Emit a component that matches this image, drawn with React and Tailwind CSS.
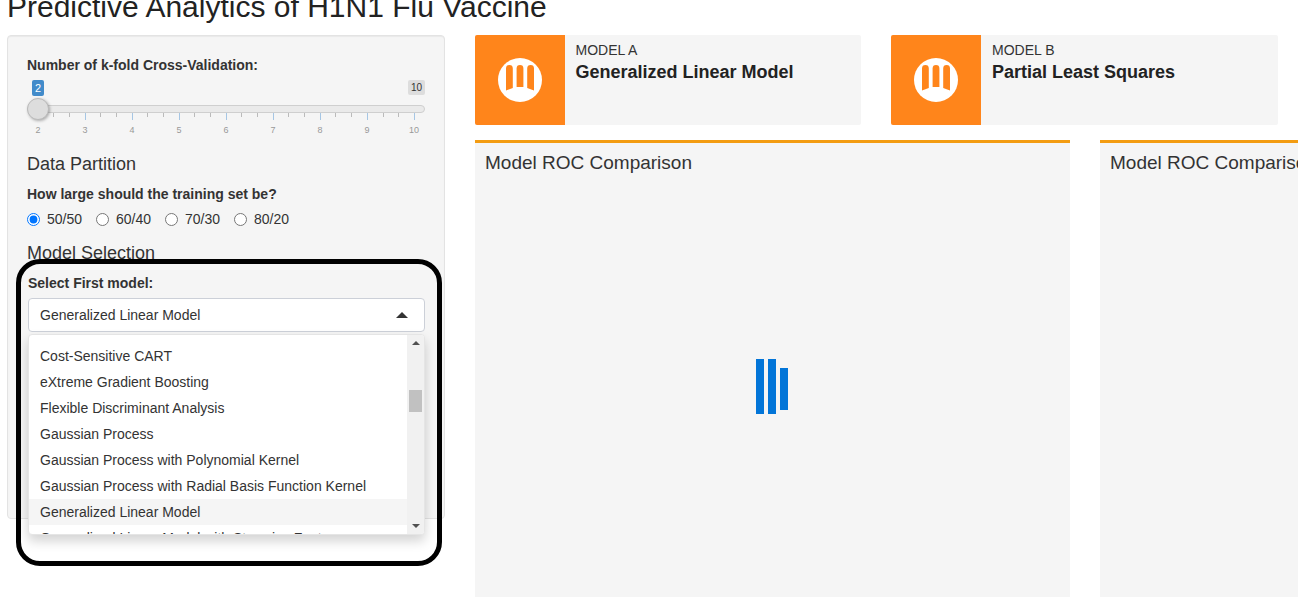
const items = [
  "Cost-Sensitive CART",
  "eXtreme Gradient Boosting",
  "Flexible Discriminant Analysis",
  "Gaussian Process",
  "Gaussian Process with Polynomial Kernel",
  "Gaussian Process with Radial Basis Function Kernel",
  "Generalized Linear Model",
  "Generalized Linear Model with Stepwise Feature",
];

function ModelIcon() {
  return (
    <svg width="44" height="44" viewBox="0 0 44 44">
      <circle cx="22" cy="22" r="22" fill="#fff" />
      <path d="M8 32.5V10.5a3.4 3.4 0 0 1 6.8 0V30Z" fill="#ff851b" />
      <path d="M18.6 29V10.4a3.4 3.4 0 0 1 6.8 0V29Z" fill="#ff851b" />
      <path d="M36 32.5V10.5a3.4 3.4 0 0 0-6.8 0V30Z" fill="#ff851b" />
    </svg>
  );
}

function InfoBox({ label, name, wide }) {
  return (
    <div className={`flex h-[90px] bg-[#f5f5f5] rounded-[2px] overflow-hidden ${wide ? "w-[387px]" : "w-[386px]"}`}>
      <div className="w-[90px] h-[90px] bg-[#ff851b] flex items-center justify-center shrink-0">
        <ModelIcon />
      </div>
      <div className={`pt-[5px] ${wide ? "pl-[11px]" : "pl-[10.5px]"}`}>
        <div className="text-[14px] leading-[20px] text-[#333]">{label}</div>
        <div className="text-[18px] leading-[22px] mt-[1px] font-bold text-[#222]">{name}</div>
      </div>
    </div>
  );
}

function Panel({ loader }) {
  return (
    <div className="relative w-[595px] h-[600px] shrink-0 bg-[#f5f5f5] border-t-[3px] border-[#f39c12] px-[10px] pt-[7px]">
      <div className="text-[19px] leading-[26px] text-[#333] whitespace-nowrap">Model ROC Comparison</div>
      {loader && (
        <div className="absolute left-[281px] top-[216px] flex items-start gap-[4px]">
          <div className="w-[8px] h-[55px] bg-[#0275d8]" />
          <div className="w-[8px] h-[55px] bg-[#0275d8]" />
          <div className="w-[8px] h-[42px] mt-[9px] bg-[#0275d8]" />
        </div>
      )}
    </div>
  );
}

function Slider() {
  const majors = Array.from({ length: 9 }, (_, i) => i);
  return (
    <div className="mt-[5px]">
      <div className="flex justify-between items-start h-[17px] pl-[5px]">
        <span className="w-[12px] h-[16px] rounded-[2px] bg-[#428bca] text-white text-[11px] leading-[16px] text-center">2</span>
        <span className="w-[17px] h-[15px] rounded-[2px] bg-[#dddddd] text-[#333] text-[10px] leading-[15px] text-center">10</span>
      </div>
      <div className="relative h-[8px] mt-[8px] rounded-[4px] bg-[#eaeaea] border border-[#cfcfcf]">
        <div className="absolute left-[-1px] top-[-8px] w-[22px] h-[22px] rounded-full bg-[#dddddd] border border-[#bbbbbb] shadow-[1px_1px_3px_rgba(0,0,0,0.3)]" />
      </div>
      <svg className="block" width="398" height="7" viewBox="0 0 398 7">
        {majors.map((i) => (
          <rect key={i} x={Math.round(10.5 + i * 47.05)} y="0" width="1" height="7" fill="#a6c6e4" />
        ))}
        {majors.slice(0, 8).map((i) => (
          <g key={i}>
            <rect x={Math.round(10.5 + i * 47.05 + 15.7)} y="0" width="1" height="4" fill="#bbb" />
            <rect x={Math.round(10.5 + i * 47.05 + 31.4)} y="0" width="1" height="4" fill="#bbb" />
          </g>
        ))}
      </svg>
      <div className="flex justify-between -ml-[1px] w-[400px] mt-[3px] text-[9px] leading-[14px] text-[#999] text-center">
        {[2, 3, 4, 5, 6, 7, 8, 9, 10].map((n) => (
          <span key={n} className="w-[24px]">{n}</span>
        ))}
      </div>
    </div>
  );
}

function Radio({ label, checked, className }) {
  return (
    <label className={`flex items-center text-[14px] leading-[20px] text-[#333] ${className}`}>
      <input type="radio" name="split" defaultChecked={checked} className="w-[13px] h-[13px] m-0 mr-[7px]" />
      {label}
    </label>
  );
}

export default function App() {
  return (
    <div className="relative w-[1298px] h-[597px] overflow-hidden bg-white font-['Liberation_Sans',Arial,sans-serif] text-[#333]">
      <h1 className="mt-[-10px] ml-[7px] h-[45px] text-[30px] leading-[33px] font-normal text-[#222] whitespace-nowrap">
        Predictive Analytics of H1N1 Flu Vaccine
      </h1>
      <div className="flex">
        <aside className="relative w-[438px] h-[484px] ml-[7px] shrink-0 bg-[#f5f5f5] border border-[#e3e3e3] rounded-[4px] px-[19px] pt-[19px] shadow-[inset_0_1px_1px_rgba(0,0,0,0.05)]">
          <div className="text-[14px] leading-[20px] font-bold">Number of k-fold Cross-Validation:</div>
          <Slider />
          <h3 className="mt-[17px] text-[18px] leading-[20px] font-normal">Data Partition</h3>
          <div className="mt-[10px] text-[14px] leading-[20px] font-bold">How large should the training set be?</div>
          <div className="flex mt-[5px]">
            <Radio label="50/50" checked className="w-[69px]" />
            <Radio label="60/40" className="w-[69px]" />
            <Radio label="70/30" className="w-[69px]" />
            <Radio label="80/20" />
          </div>
          <h3 className="mt-[14px] text-[18px] leading-[20px] font-normal">Model Selection</h3>
          <div className="mt-[10px] ml-[1px] text-[14px] leading-[20px] font-bold">Select First model:</div>
          <div className="relative ml-[1px] mt-[5px] w-[397px]">
            <div className="flex items-center justify-between h-[34px] bg-white border border-[#ccd0d8] rounded-[4px] pl-[11px] pr-[16px] text-[14px]">
              <span>Generalized Linear Model</span>
              <svg width="12" height="6" viewBox="0 0 12 6"><path d="M6 0 12 6H0Z" fill="#333" /></svg>
            </div>
            <div className="absolute left-0 top-[36px] w-[397px] h-[201px] flex bg-white border border-[#e5e5e5] rounded-[4px] overflow-hidden shadow-[0_6px_12px_rgba(0,0,0,0.175)]">
              <ul className="flex-1 pt-[8px] overflow-hidden text-[14px]">
                {items.map((it) => (
                  <li
                    key={it}
                    className={`h-[26px] leading-[26px] pl-[11px] whitespace-nowrap ${it === "Generalized Linear Model" ? "bg-[#f5f5f5]" : ""}`}
                  >
                    {it}
                  </li>
                ))}
              </ul>
              <div className="relative w-[17px] bg-[#f1f1f1] flex flex-col items-center justify-between py-[6px]">
                <svg width="8" height="4" viewBox="0 0 8 4"><path d="M4 0 8 4H0Z" fill="#505050" /></svg>
                <svg width="8" height="4" viewBox="0 0 8 4"><path d="M0 0H8L4 4Z" fill="#505050" /></svg>
                <div className="absolute left-[2px] top-[55px] w-[13px] h-[22px] bg-[#c1c1c1]" />
              </div>
            </div>
          </div>
        </aside>
        <main className="flex-1 min-w-0 ml-[30px]">
          <div className="flex gap-[30px]">
            <InfoBox label="MODEL A" name="Generalized Linear Model" />
            <InfoBox label="MODEL B" name="Partial Least Squares" wide />
          </div>
          <div className="flex gap-[30px] mt-[15px]">
            <Panel loader />
            <Panel />
          </div>
        </main>
      </div>
      <div className="absolute left-[16px] top-[259px] w-[426px] h-[307px] border-[5px] border-black rounded-[24px] pointer-events-none" />
    </div>
  );
}
